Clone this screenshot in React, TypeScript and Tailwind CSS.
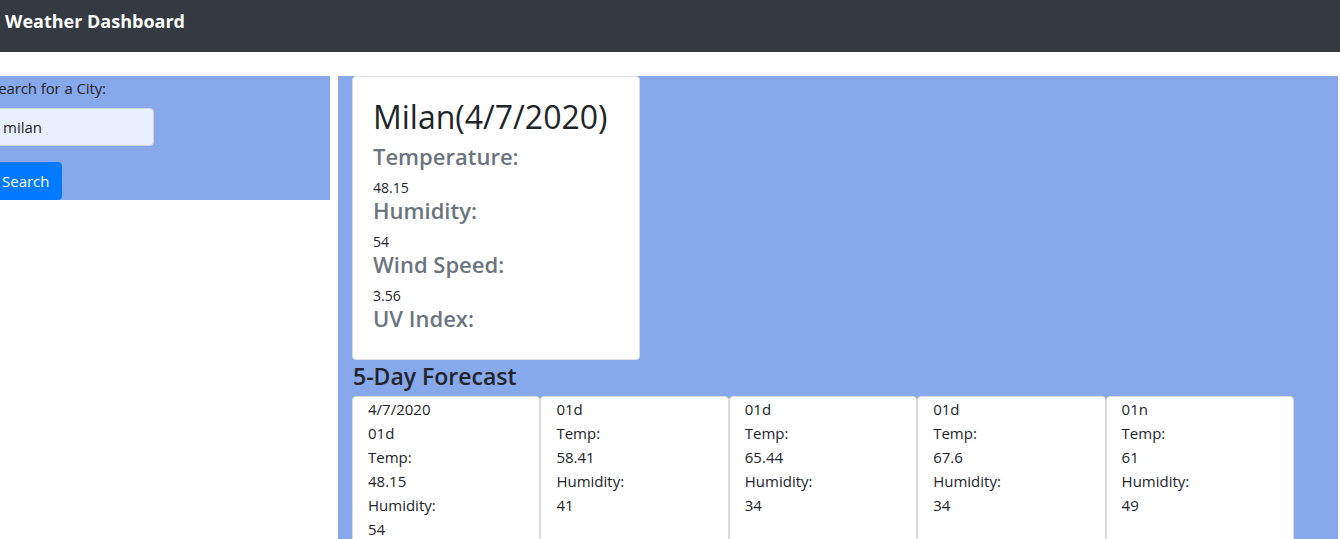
import React from "react";

const forecast = [
  { date: "4/7/2020", icon: "01d", temp: "48.15", humidity: "54" },
  { date: "", icon: "01d", temp: "58.41", humidity: "41" },
  { date: "", icon: "01d", temp: "65.44", humidity: "34" },
  { date: "", icon: "01d", temp: "67.6", humidity: "34" },
  { date: "", icon: "01n", temp: "61", humidity: "49" },
];

const stats = [
  { label: "Temperature:", value: "48.15" },
  { label: "Humidity:", value: "54" },
  { label: "Wind Speed:", value: "3.56" },
  { label: "UV Index:", value: "" },
];

const App = () => {
  return (
    <div className="min-h-[539px] bg-white text-[#212529] font-['Open_Sans','Noto_Sans',sans-serif] overflow-hidden">
      <nav className="h-[52px] bg-[#343a40] flex items-center px-[5px]">
        <span className="text-white text-[18px] font-bold pb-[10px]">Weather Dashboard</span>
      </nav>

      <div className="flex gap-[8px] mt-[24px]">
        <div className="w-[330px] shrink-0 self-start bg-[#87a8eb]">
          <div className="-ml-[10px] flex flex-col items-start">
            <label className="text-[15px] leading-[24px] mb-[8px] tracking-[-0.1px]">Search for a City:</label>
            <input
              type="text"
              defaultValue="milan"
              className="w-[164px] h-[38px] px-[12px] text-[15px] bg-[#e8f0fe] border border-[#ced4da] rounded-[4px] outline-none mb-[16px]"
            />
            <button className="h-[38px] px-[11px] text-[15px] text-white bg-[#007bff] border border-[#007bff] rounded-[4px]">
              Search
            </button>
          </div>
        </div>

        <div className="w-[1000px] shrink-0 bg-[#87a8eb] min-h-[463px] pl-[14px]">
          <div className="w-[288px] bg-white border border-[#dfdfdf] rounded-[4px] px-[20px] pt-[21px] pb-[18px]">
            <h2 className="text-[32px] leading-[38px] font-medium mb-[6px]">Milan(4/7/2020)</h2>
            {stats.map((s) => (
              <div key={s.label}>
                <h4 className="text-[22px] leading-[29px] font-semibold text-[#6c757d] mb-[8px]">{s.label}</h4>
                {s.value && <p className="text-[14px] leading-[17px]">{s.value}</p>}
              </div>
            ))}
          </div>

          <h3 className="text-[23px] leading-[36px] font-semibold ml-[1px] -mt-[2px] mb-[2px]">5-Day Forecast</h3>

          <div className="grid grid-cols-5 w-[942px] min-h-[150px]">
            {forecast.map((f, i) => (
              <div
                key={i}
                className="bg-white border border-[#dcdcdc] rounded-[4px] pl-[15px] text-[15px] leading-[24px]"
              >
                {f.date && <p>{f.date}</p>}
                <p>{f.icon}</p>
                <p>Temp:</p>
                <p>{f.temp}</p>
                <p>Humidity:</p>
                <p>{f.humidity}</p>
              </div>
            ))}
          </div>
        </div>
      </div>
    </div>
  );
};

export default App;
